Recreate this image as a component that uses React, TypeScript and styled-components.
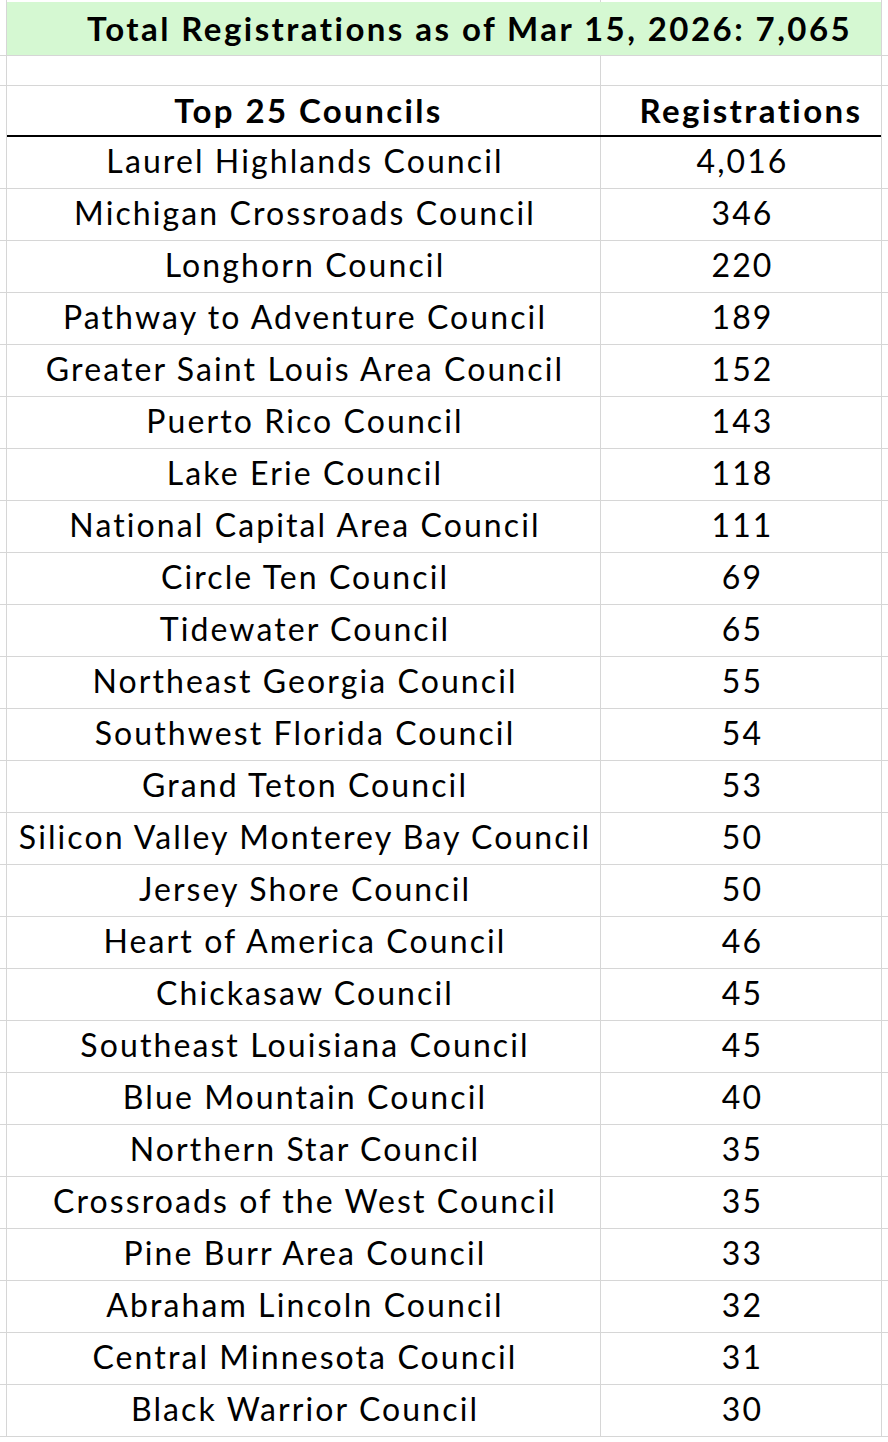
import React from 'react'
import styled, {createGlobalStyle} from 'styled-components'

const GlobalStyle = createGlobalStyle`
  html, body {
    margin: 0;
    padding: 0;
    background: #ffffff;
  }
  body {
    font-family: Lato, "Noto Sans", "Liberation Sans", sans-serif;
    color: #000000;
  }
`

const gridLine = '#d6d6d6'

const Sheet = styled.div`
  width: 888px;
  display: flex;
  flex-direction: column;
`

const Row = styled.div<{$h: number; $line?: boolean}>`
  display: grid;
  grid-template-columns: 6px 593px 280px 1fr;
  column-gap: 1px;
  height: ${(p) => p.$h}px;
  background: ${gridLine};
  border-bottom: ${(p) => (p.$line === false ? 'none' : `1px solid ${gridLine}`)};
`

const Stub = styled.div`
  background: #ffffff;
`

const Cell = styled.div`
  background: #ffffff;
  display: flex;
  align-items: center;
  justify-content: center;
  white-space: nowrap;
  font-size: 32px;
  letter-spacing: 2.1px;
  padding-left: 3px;
  padding-bottom: 4px;
  box-sizing: border-box;
`

const HeadCell = styled(Cell)<{$shift: number}>`
  font-weight: 700;
  font-size: 33px;
  letter-spacing: 2.4px;
  padding-left: ${(p) => p.$shift}px;
  padding-bottom: 2px;
`

const Banner = styled.div`
  grid-column: 2 / span 2;
  background: #d5f8d2;
  display: flex;
  align-items: center;
  justify-content: center;
  padding-left: 51px;
  padding-bottom: 2px;
  box-sizing: border-box;
  font-weight: 700;
  font-size: 33px;
  letter-spacing: 2.45px;
  white-space: nowrap;
`

const Rule = styled.div`
  grid-column: 2 / span 2;
  background: #000000;
`

const councils: [string, string][] = [
  ['Laurel Highlands Council', '4,016'],
  ['Michigan Crossroads Council', '346'],
  ['Longhorn Council', '220'],
  ['Pathway to Adventure Council', '189'],
  ['Greater Saint Louis Area Council', '152'],
  ['Puerto Rico Council', '143'],
  ['Lake Erie Council', '118'],
  ['National Capital Area Council', '111'],
  ['Circle Ten Council', '69'],
  ['Tidewater Council', '65'],
  ['Northeast Georgia Council', '55'],
  ['Southwest Florida Council', '54'],
  ['Grand Teton Council', '53'],
  ['Silicon Valley Monterey Bay Council', '50'],
  ['Jersey Shore Council', '50'],
  ['Heart of America Council', '46'],
  ['Chickasaw Council', '45'],
  ['Southeast Louisiana Council', '45'],
  ['Blue Mountain Council', '40'],
  ['Northern Star Council', '35'],
  ['Crossroads of the West Council', '35'],
  ['Pine Burr Area Council', '33'],
  ['Abraham Lincoln Council', '32'],
  ['Central Minnesota Council', '31'],
  ['Black Warrior Council', '30'],
]

export default function App() {
  return (
    <>
      <GlobalStyle />
      <Sheet>
        <Row $h={2} $line={false}>
          <Stub />
          <Stub />
          <Stub />
          <Stub />
        </Row>
        <Row $h={53}>
          <Stub />
          <Banner>Total Registrations as of Mar 15, 2026: 7,065</Banner>
          <Stub />
        </Row>
        <Row $h={29}>
          <Stub />
          <Stub />
          <Stub />
          <Stub />
        </Row>
        <Row $h={49} $line={false}>
          <Stub />
          <HeadCell $shift={10}>Top 25 Councils</HeadCell>
          <HeadCell $shift={20}>Registrations</HeadCell>
          <Stub />
        </Row>
        <Row $h={2} $line={false}>
          <Stub />
          <Rule />
          <Stub />
        </Row>
        {councils.map(([name, count]) => (
          <Row key={name} $h={51}>
            <Stub />
            <Cell>{name}</Cell>
            <Cell>{count}</Cell>
            <Stub />
          </Row>
        ))}
      </Sheet>
    </>
  )
}
